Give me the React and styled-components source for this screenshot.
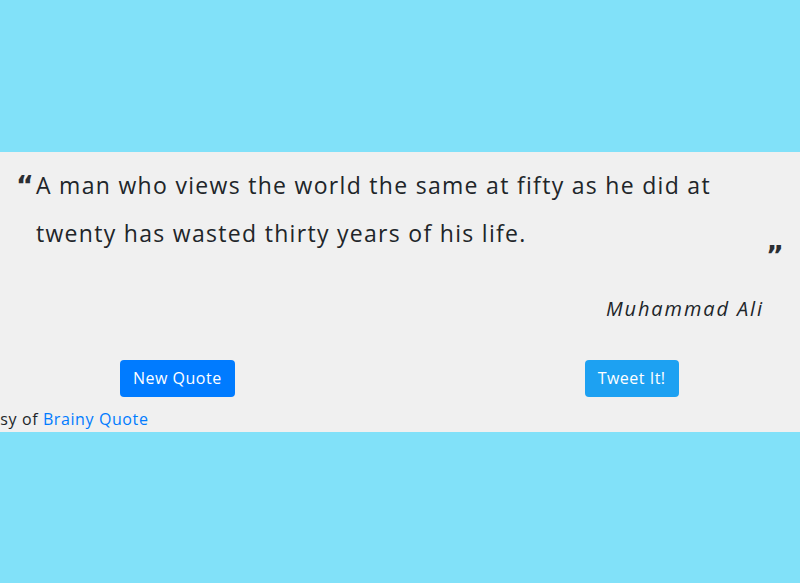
import styled, { createGlobalStyle } from 'styled-components';

const Global = createGlobalStyle`
    html, body {
        margin:0;
        height:100%;
        background-color:#81e1f9;
        font-family:"Open Sans", "Liberation Sans", sans-serif;
        color:#212529;
    }
    #root {
        height:100%;
    }
`;

const Page = styled.div`
    height:100%;
    display:flex;
    align-items:center;
    overflow:hidden;
`;

const Card = styled.div`
    width:100%;
    height:280px;
    box-sizing:border-box;
    background-color:#f0f0f0;
    padding:9px 14px 0 16px;
    display:flex;
    flex-direction:column;
`;

const QuoteRow = styled.div`
    display:flex;
    align-items:flex-start;
`;

const Mark = styled.span`
    font-family:"DejaVu Sans", sans-serif;
    font-weight:700;
    font-size:27px;
    line-height:1;
    color:#2b2e33;
    width:20px;
    flex-shrink:0;
    margin-top:${p => p.top || 0}px;
`;

const Text = styled.p`
    margin:0;
    max-width:715px;
    font-size:23px;
    line-height:48px;
    letter-spacing:1.3px;
`;

const CloseRow = styled.div`
    display:flex;
    justify-content:flex-end;
    margin-top:-15px;
    height:30px;
`;

const Author = styled.div`
    text-align:right;
    font-style:italic;
    font-size:20px;
    letter-spacing:1.9px;
    padding-right:22px;
    margin-top:23px;
`;

const ButtonRow = styled.div`
    display:flex;
    gap:350px;
    padding-left:104px;
    margin-top:38px;
`;

const Button = styled.button`
    font-family:inherit;
    font-size:16px;
    letter-spacing:0.5px;
    color:white;
    border:none;
    border-radius:4px;
    height:37px;
    padding:0 13px;
    cursor:pointer;
    background-color:${p => p.color};
`;

const Footer = styled.div`
    font-size:16px;
    letter-spacing:0.6px;
    margin:11px 0 0 -70px;
    a {
        color:#007bff;
        text-decoration:none;
    }
`;

function App() {
    return (
        <Page>
            <Global />
            <Card>
                <QuoteRow>
                    <Mark top={11}>“</Mark>
                    <Text>A man who views the world the same at fifty as he did at twenty has wasted thirty years of his life.</Text>
                </QuoteRow>
                <CloseRow>
                    <Mark>”</Mark>
                </CloseRow>
                <Author>Muhammad Ali</Author>
                <ButtonRow>
                    <Button color="#007bff">New Quote</Button>
                    <Button color="#1da1f2">Tweet It!</Button>
                </ButtonRow>
                <Footer>Courtesy of <a href="#">Brainy Quote</a></Footer>
            </Card>
        </Page>
    )
}

export default App
